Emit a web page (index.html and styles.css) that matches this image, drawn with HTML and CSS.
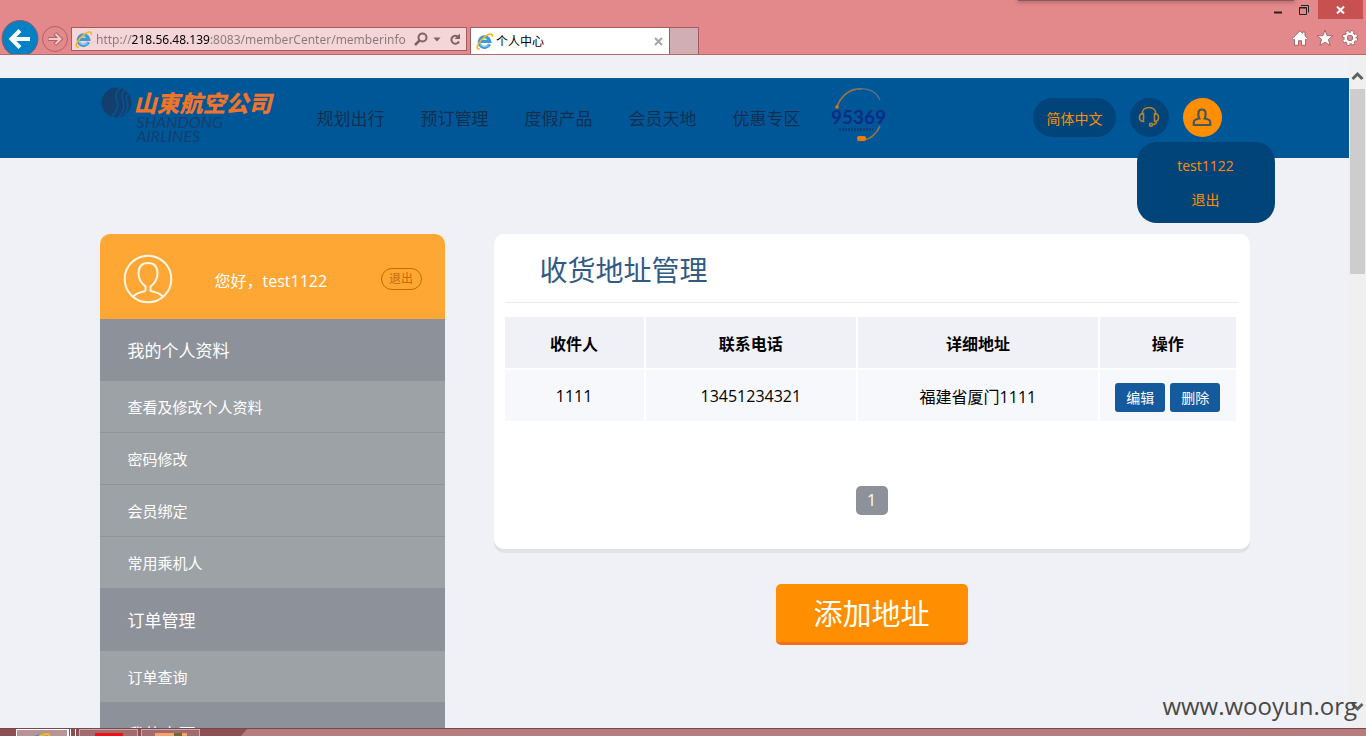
FILE: index.html
```html
<!DOCTYPE html>
<html lang="zh-CN">
<head>
<meta charset="utf-8">
<title>个人中心</title>
<link rel="stylesheet" href="styles.css">
</head>
<body>
<svg class="defs" aria-hidden="true">
  <symbol id="ie" viewBox="0 0 16 16">
    <path d="M12.7 10.4A5 5 0 1 1 13 7.9H4.4" fill="none" stroke="#3f9ad6" stroke-width="3"/>
    <path d="M12 10.8A4.600 4.600 0 0 1 3.700 9" fill="none" stroke="#8fd0f3" stroke-width="1"/>
    <path d="M3.500 14.800C1 15.700.3 13.800 2.200 10.500 4.600 6.200 9.500 1.900 13 1c2.300-.5 2.700.8 2 2.600" fill="none" stroke="#f3b820" stroke-width="1.500"/>
  </symbol>
</svg>

<div class="chrome">
  <div class="window-edge"></div>
  <div class="window-controls">
    <button class="win-btn" aria-label="最小化"><svg width="10" height="12" viewBox="0 0 10 12"><path d="M1 8.500h8" stroke="#222" stroke-width="2"/></svg></button>
    <button class="win-btn" aria-label="还原"><svg width="10" height="12" viewBox="0 0 10 12"><path d="M.5 3.500h7v7h-7zM0 4h8M2 1.500h7.500v7" fill="none" stroke="#222"/></svg></button>
    <button class="win-btn win-close" aria-label="关闭"><svg width="9" height="8" viewBox="0 0 9 8"><path d="M1 .5l7 7M8 .5l-7 7" stroke="#fff" stroke-width="2"/></svg></button>
  </div>
  <div class="toolbar">
    <button class="back" aria-label="后退"><svg width="38" height="34" viewBox="0 0 38 34"><circle cx="19" cy="18.500" r="18" fill="#0480c4" stroke="#8e5a64"/><path d="M29 19H11M19 10.500L10.500 19l8.500 8.500" fill="none" stroke="#fff" stroke-width="4"/></svg></button>
    <button class="forward" aria-label="前进"><svg width="28" height="28" viewBox="0 0 28 28"><circle cx="14" cy="14" r="12.500" fill="none" stroke="#ad6366"/><path d="M7 14h12M14 8.500l5.500 5.500-5.500 5.500" fill="none" stroke="#ad6366" stroke-width="4"/><path d="M7.500 14h11M14.500 9l5 5-5 5" fill="none" stroke="#f4c9cb" stroke-width="2"/></svg></button>
    <div class="address">
      <svg width="17" height="17"><use href="#ie"/></svg>
      <input class="url" type="text" aria-label="地址" value="http://218.56.48.139:8083/memberCenter/memberinfo">
      <button class="addr-btn" aria-label="搜索"><svg width="14" height="14" viewBox="0 0 14 14"><circle cx="8.500" cy="5.500" r="4" fill="none" stroke="#7c6264" stroke-width="2"/><path d="M5.500 8.500L1 13" stroke="#7c6264" stroke-width="2.500"/></svg></button>
      <button class="addr-btn" aria-label="展开"><svg width="8" height="5" viewBox="0 0 8 5"><path d="M.5.5h7L4 4.500z" fill="#7c6264"/></svg></button>
      <button class="addr-btn" aria-label="刷新"><svg width="12" height="13" viewBox="0 0 12 13"><path d="M9.500 4.200A4 4 0 1 0 10 8.500" fill="none" stroke="#7c6264" stroke-width="2"/><path d="M11 .5v5.500H5.500z" fill="#7c6264"/></svg></button>
    </div>
    <div class="tab">
      <svg width="17" height="17"><use href="#ie"/></svg>
      <span class="tab-title">个人中心</span>
      <button class="tab-close" aria-label="关闭标签页"><svg width="9" height="9" viewBox="0 0 9 9"><path d="M1 1l7 7M8 1L1 8" stroke="#a6a6a6" stroke-width="2"/></svg></button>
    </div>
    <button class="new-tab" aria-label="新建标签页"></button>
    <div class="tools">
      <button aria-label="主页"><svg width="16" height="16" viewBox="0 0 16 16"><path d="M8 .8l2.500 2.500V2h2.500v3.800l2.700 2.700-1.400 1.400-.8-.7v6H9.500v-4.500h-3v4.500h-4V9.200l-.8.7L.3 8.500z" fill="#fff" stroke="#8b5659" stroke-width=".8"/></svg></button>
      <button aria-label="收藏夹"><svg width="16" height="16" viewBox="0 0 16 16"><path d="M8 .2l2.100 5.500h5.700l-4.400 3.700 1.700 6L8 12.200l-5.100 3.200 1.700-6L.2 5.700h5.700z" fill="#fff" stroke="#8b5659" stroke-width=".8"/></svg></button>
      <button aria-label="工具"><svg width="16" height="16" viewBox="0 0 16 16"><circle cx="8" cy="8" r="6" fill="none" stroke="#8b5659" stroke-width="3.600" stroke-dasharray="2.900 1.812"/><circle cx="8" cy="8" r="4.300" fill="none" stroke="#8b5659" stroke-width="4"/><circle cx="8" cy="8" r="6" fill="none" stroke="#fff" stroke-width="2.400" stroke-dasharray="2.200 2.512" stroke-dashoffset="-.35"/><circle cx="8" cy="8" r="4.300" fill="none" stroke="#fff" stroke-width="2.600"/></svg></button>
    </div>
  </div>
</div>

<div class="viewport">
  <div class="page">
    <header class="header">
      <div class="wrap header-row">
        <a class="logo" href="#" aria-label="山东航空公司">
          <svg class="logo-mark" width="31" height="31" viewBox="0 0 31 31">
            <circle cx="15.500" cy="15.500" r="15" fill="#133f6e"/>
            <path d="M21 0C14 4 14 9 16 14s0 11-5 15M25 2c-5 4-5 8-3 12.500s0 11-4 15.500M29 6c-4 2-4.500 5-3 9s0 9-3 13" fill="none" stroke="#0a528e" stroke-width="1.800"/>
          </svg>
          <span class="logo-text">
            <span class="logo-cn">山東航空公司</span>
            <span class="logo-en">SHANDONG</span>
            <span class="logo-en">AIRLINES</span>
          </span>
        </a>
        <nav class="nav">
          <a href="#">规划出行</a>
          <a href="#">预订管理</a>
          <a href="#">度假产品</a>
          <a href="#">会员天地</a>
          <a href="#">优惠专区</a>
        </nav>
        <a class="hotline" href="#" aria-label="95369">
          <svg width="58" height="56" viewBox="0 0 58 56">
            <path d="M7 20C11 8 21 1 32 2" fill="none" stroke="#a6733e" stroke-width="1.600"/>
            <path d="M24 3C36-1 46 4 50 13" fill="none" stroke="#627184" stroke-width="1.200"/>
            <path d="M50 39C47 46 41 52 34 53" fill="none" stroke="#a6733e" stroke-width="1.500"/>
            <circle cx="7" cy="20" r="1.800" fill="#e8740e"/>
            <rect x="27" y="49" width="9" height="5" rx="2" fill="#f07a0a"/>
            <path d="M9 42.500h34" stroke="#0b3f7c" stroke-width="3" stroke-dasharray="2 1"/>
            <text class="hotline-num" x="1" y="37">95369</text>
          </svg>
        </a>
        <div class="account">
          <button class="lang">简体中文</button>
          <button class="round" aria-label="客服"><svg width="22" height="22" viewBox="0 0 22 22" fill="none" stroke="#b28431" stroke-width="1.600"><path d="M4 8.500C4 4 7 1.500 11 1.500s7 2.500 7 7"/><path d="M5.500 7.500v8C3 15.500 1.500 14 1.500 11.500s1.500-4 4-4zM16.500 7.500v8c2.500 0 4-1.500 4-4s-1.500-4-4-4z"/><path d="M18.500 15.500c0 2-1.500 3-4 3"/><circle cx="13" cy="18.700" r="1.500"/></svg></button>
          <button class="round round-on" aria-label="我的账户"><svg width="20" height="19" viewBox="0 0 20 19" fill="none" stroke="#46565e" stroke-width="2.200"><path d="M7.200 10.500C6.400 9.500 6.400 7.500 6.400 5.500 6.400 3 7.500 1.500 10 1.500s3.600 1.500 3.600 4c0 2 0 4-.8 5 3.500.7 5.400 1.200 5.400 3.500v3H1.800v-3c0-2.300 1.900-2.800 5.400-3.500z"/></svg></button>
          <div class="menu">
            <a href="#">test1122</a>
            <a href="#">退出</a>
          </div>
        </div>
      </div>
    </header>

    <div class="wrap columns">
      <aside class="side">
        <div class="hello">
          <svg width="50" height="50" viewBox="0 0 50 50" fill="none" stroke="#fff5e5" stroke-width="2"><circle cx="25" cy="25" r="23.300"/><path d="M22.500 37v-4.500c-4-3-7-7.500-7-13 0-7 3.500-10.500 9.500-10.500s9.500 3.500 9.500 10.500c0 5.500-3 10-7 13V37c5 1 10 2.500 12.500 5.800M22.500 37c-5 1-10 2.500-12.500 5.800"/></svg>
          <span class="hello-name">您好，test1122</span>
          <button class="logout">退出</button>
        </div>
        <h2 class="group">我的个人资料</h2>
        <a class="item" href="#">查看及修改个人资料</a>
        <a class="item" href="#">密码修改</a>
        <a class="item" href="#">会员绑定</a>
        <a class="item" href="#">常用乘机人</a>
        <h2 class="group">订单管理</h2>
        <a class="item" href="#">订单查询</a>
        <h2 class="group">我的卡页</h2>
      </aside>

      <main class="main">
        <section class="card">
          <h1 class="title">收货地址管理</h1>
          <table class="list">
            <colgroup><col class="c-name"><col class="c-phone"><col class="c-addr"><col class="c-ops"></colgroup>
            <thead><tr><th>收件人</th><th>联系电话</th><th>详细地址</th><th>操作</th></tr></thead>
            <tbody><tr>
              <td>1111</td><td>13451234321</td><td>福建省厦门1111</td>
              <td><div class="ops"><button class="op">编辑</button><button class="op">删除</button></div></td>
            </tr></tbody>
          </table>
          <div class="pager"><a class="page-no" href="#">1</a></div>
        </section>
        <button class="add">添加地址</button>
      </main>
    </div>
  </div>
  <div class="scrollbar">
    <svg width="13" height="10" viewBox="0 0 13 10"><path d="M1.500 8l5-5 5 5" fill="none" stroke="#606060" stroke-width="3"/></svg>
    <div class="thumb"></div>
    <svg width="13" height="10" viewBox="0 0 13 10"><path d="M1.500 2l5 5 5-5" fill="none" stroke="#606060" stroke-width="3"/></svg>
  </div>
  <div class="watermark">www.wooyun.org</div>
</div>

<div class="taskbar">
  <div class="task task-on"><svg width="22" height="8" viewBox="0 0 22 8"><path d="M2 8c4-3 8-5 13-6 3-.5 4 1 2 4" fill="none" stroke="#f0bd20" stroke-width="2"/><path d="M3 4l6-2-4 5z" fill="#3a91bd"/></svg></div>
  <div class="task-stack"></div>
  <div class="task"><span class="thumb-red"></span></div>
  <div class="task"><span class="thumb-photo"></span></div>
  <svg class="task-sheen" height="8" viewBox="0 0 1128 8" preserveAspectRatio="none"><path d="M1 8L8 0h1120v8z" fill="#b67d7e"/></svg>
</div>
</body>
</html>
```
FILE: styles.css
```css
* { box-sizing: border-box; }

body {
  margin: 0;
  height: 100vh;
  display: flex;
  flex-direction: column;
  overflow: hidden;
  background: #f0f1f6;
  font-family: "Open Sans", "Noto Sans CJK SC", sans-serif;
  font-size: 16px;
  color: #000;
}

button {
  border: 0;
  padding: 0;
  background: none;
  font: inherit;
  color: inherit;
}

a { color: inherit; text-decoration: none; }
h1, h2 { margin: 0; font-weight: 400; }
svg { display: block; flex: none; }
.defs { position: absolute; width: 0; height: 0; }

/* Browser window */
.chrome {
  position: relative;
  flex: none;
  height: 55px;
  display: flex;
  flex-direction: column;
  background: #e3898c;
  border-bottom: 1px solid #b8686b;
}

.window-edge {
  position: absolute;
  top: 0;
  right: 72px;
  width: 276px;
  height: 1px;
  background: #8d5658;
  box-shadow: 0 0 4px 1px #9c5d60;
}

.window-controls {
  position: relative;
  display: flex;
  justify-content: flex-end;
  height: 20px;
  padding-right: 3px;
}

.win-btn {
  width: 26px;
  height: 19px;
  display: flex;
  align-items: center;
  justify-content: center;
}

.win-close { width: 45px; margin-left: 1px; background: #c75050; }

.toolbar { display: flex; align-items: flex-end; height: 34px; padding-left: 1px; }
.back { width: 38px; }
.forward { margin: 0 2px 1px 2px; }

.address {
  display: flex;
  align-items: center;
  width: 396px;
  height: 24px;
  margin-bottom: 3px;
  padding: 0 5px 0 3px;
  border: 1px solid #a05c5f;
  background: #f5d6d8;
}

.url {
  flex: 1;
  min-width: 0;
  height: 20px;
  margin: 0 5px 0 4px;
  padding: 0;
  border: 0;
  outline: 0;
  font: 12px "Noto Sans", sans-serif;
  color: transparent;
  background: linear-gradient(90deg, #8b7778 36px, #000 36px, #000 114px, #8b7778 114px);
  -webkit-background-clip: text;
  background-clip: text;
}

.addr-btn + .addr-btn { margin-left: 5px; }
.addr-btn:last-child { margin-left: 8px; }

.tab {
  display: flex;
  align-items: center;
  width: 200px;
  height: 27px;
  margin-left: 3px;
  padding: 0 6px 0 5px;
  border: 1px solid #a05c5f;
  border-bottom: 0;
  background: #fff;
}

.tab-title { flex: 1; margin-left: 3px; font-size: 12px; }

.new-tab {
  width: 29px;
  height: 27px;
  border: 1px solid #a05c5f;
  border-width: 1px 1px 0 0;
  background: #d0aeb1;
}

.tools { display: flex; gap: 9px; margin-left: auto; padding: 0 8px 8px 0; }

/* Page */
.viewport { position: relative; flex: 1; min-height: 0; display: flex; }
.page { flex: 1; min-width: 0; overflow: hidden; padding-top: 23px; }
.wrap { max-width: 1150px; margin: 0 auto; }
.header { background: #005798; }
.header-row { height: 80px; display: flex; align-items: center; padding-bottom: 2px; }

.logo { display: flex; align-items: flex-start; width: 182px; height: 60px; padding-left: 1px; }
.logo-text { display: flex; flex-direction: column; padding: 3px 0 0 2px; }
.logo-cn { font: italic 900 23px/25px "Noto Sans CJK TC", sans-serif; color: #f0742a; white-space: nowrap; }
.logo-en { padding-left: 3px; font: italic 16px/14px Lato, sans-serif; color: #133f6e; }

.nav { display: flex; gap: 36px; margin-left: 35px; font-size: 17px; color: #132f50; white-space: nowrap; }
.hotline { margin-left: 29px; padding-bottom: 4px; }
.hotline-num { font: bold 19px Lato, sans-serif; fill: #0b2b85; }

.account { position: relative; display: flex; gap: 14px; margin-left: auto; padding-right: 28px; }
.lang { height: 39px; padding: 2px 13px 0 14px; border-radius: 20px; background: #00447a; color: #ff8f00; font-size: 14px; }

.round {
  width: 39px;
  height: 39px;
  display: flex;
  align-items: center;
  justify-content: center;
  border-radius: 50%;
  background: #00447a;
}

.round-on { background: #ff8f00; }

.menu {
  position: absolute;
  top: 44px;
  right: -25px;
  width: 138px;
  padding: 7px 0 6px;
  border-radius: 20px;
  background: #00447a;
  color: #ff8f00;
  font-size: 14px;
  line-height: 34px;
  text-align: center;
}

.menu a { display: block; }

.columns { display: flex; align-items: flex-start; gap: 49px; padding-top: 76px; }

.side { width: 345px; flex: none; border-radius: 10px 10px 0 0; overflow: hidden; color: #fff; }
.hello { display: flex; align-items: center; height: 85px; padding: 5px 23px 0 23px; background: #ffa735; }
.hello-name { flex: 1; margin-left: 42px; padding-top: 2px; }

.logout {
  width: 41px;
  height: 22px;
  border: 1px solid #c26d00;
  border-radius: 11px;
  color: #c26d00;
  font-size: 12px;
  line-height: 20px;
}

.group { height: 62px; padding-left: 28px; background: #8d929a; font-size: 17px; line-height: 64px; }

.item {
  display: block;
  height: 52px;
  padding-left: 28px;
  border-bottom: 1px solid #8f9499;
  background: #9da2a6;
  font-size: 15px;
  line-height: 52px;
}

.main { flex: 1; min-width: 0; display: flex; flex-direction: column; align-items: center; gap: 35px; }

.card {
  width: 100%;
  padding: 0 11px 34px;
  border-radius: 10px;
  background: #fff;
  box-shadow: 0 4px 0 #e1e2e6;
}

.title {
  height: 69px;
  padding-left: 35px;
  border-bottom: 1px solid #ebebeb;
  color: #315b84;
  font-size: 28px;
  line-height: 72px;
}

.list {
  width: calc(100% + 1px);
  margin: 12px 0 0 -2px;
  table-layout: fixed;
  border-spacing: 2px;
  text-align: center;
}

.c-name { width: 19.2%; }
.c-phone { width: 29%; }
.c-addr { width: 33.1%; }
.c-ops { width: 18.7%; }

.list th, .list td { height: 51px; padding: 0; }
.list th { background: #f0f1f6; }
.list td { background: #f7f8fb; }

.ops { display: flex; justify-content: center; gap: 5px; padding-top: 3px; }
.op { width: 50px; height: 29px; border-radius: 3px; background: #155a9c; color: #fff; font-size: 14px; }

.pager { display: flex; justify-content: center; margin-top: 63px; }
.page-no { width: 32px; border-radius: 5px; background: #8d929a; color: #fff; font-size: 16px; line-height: 29px; text-align: center; }

.add {
  width: 192px;
  height: 61px;
  padding-top: 2px;
  border-radius: 5px;
  border-bottom: 3px solid #f36f1e;
  background: #ff8f00;
  color: #fff;
  font-size: 29px;
  line-height: 56px;
}

.scrollbar {
  width: 17px;
  flex: none;
  display: flex;
  flex-direction: column;
  align-items: center;
  padding: 16px 0;
  background: #f0f0f0;
}

.thumb { width: 15px; height: 185px; margin: 8px 0 auto; background: #cdcdcd; }

.watermark {
  position: absolute;
  right: 9px;
  bottom: 6px;
  color: #484848;
  font-size: 24px;
}

/* Taskbar */
.taskbar { flex: none; display: flex; height: 8px; padding-left: 16px; overflow: hidden; background: #8c5054; border-top: 1px solid #75484b; }
.task { width: 59px; height: 12px; margin-right: 3px; display: flex; justify-content: center; border: 1px solid #d0a9ab; background: #a06c6f; }
.task-on { width: 52px; margin: 0; border-color: #fff; background: #b89496; padding-top: 2px; }
.task-stack { width: 8px; margin-right: 3px; border: 1px solid #fff; border-width: 0 1px 0 0; border-left: 3px double #fff; }
.thumb-red { width: 28px; height: 8px; margin-top: 3px; background: #f00f14; }
.thumb-photo { width: 32px; height: 8px; margin-top: 3px; background: linear-gradient(90deg, #f5a26d 60%, #6e6a38 60%, #6e6a38 85%, #f5a26d 85%); }
.task-sheen { flex: 1; min-width: 0; margin-left: 36px; }
```
